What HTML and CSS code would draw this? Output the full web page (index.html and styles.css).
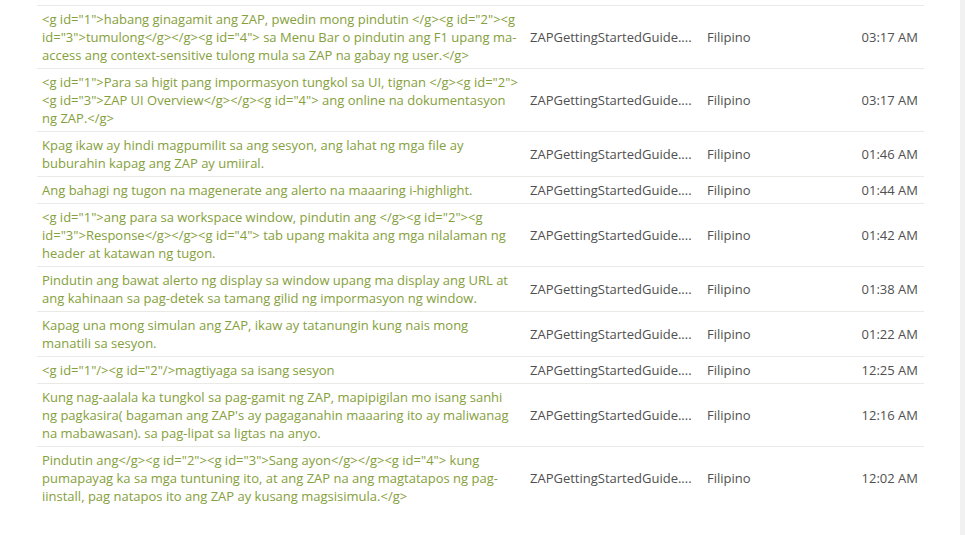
FILE: index.html
```html
<!DOCTYPE html>
<html>
<head>
<meta charset="utf-8">
<link rel="stylesheet" href="styles.css">
</head>
<body>
<div class="page">
  <main class="main">
    <table class="list">
      <colgroup>
        <col class="c-text"><col class="c-file"><col class="c-lang"><col class="c-time">
      </colgroup>
      <tbody>
        <tr><td class="src">&lt;g id="1"&gt;habang ginagamit ang ZAP, pwedin mong pindutin &lt;/g&gt;&lt;g id="2"&gt;&lt;g id="3"&gt;tumulong&lt;/g&gt;&lt;/g&gt;&lt;g id="4"&gt; sa Menu Bar o pindutin ang F1 upang ma-access ang context-sensitive tulong mula sa ZAP na gabay ng user.&lt;/g&gt;</td><td class="file">ZAPGettingStartedGuide....</td><td class="lang">Filipino</td><td class="time">03:17 AM</td></tr>
        <tr><td class="src">&lt;g id="1"&gt;Para sa higit pang impormasyon tungkol sa UI, tignan &lt;/g&gt;&lt;g id="2"&gt; &lt;g id="3"&gt;ZAP UI Overview&lt;/g&gt;&lt;/g&gt;&lt;g id="4"&gt; ang online na dokumentasyon ng ZAP.&lt;/g&gt;</td><td class="file">ZAPGettingStartedGuide....</td><td class="lang">Filipino</td><td class="time">03:17 AM</td></tr>
        <tr><td class="src">Kpag ikaw ay hindi magpumilit sa ang sesyon, ang lahat ng mga file ay buburahin kapag ang ZAP ay umiiral.</td><td class="file">ZAPGettingStartedGuide....</td><td class="lang">Filipino</td><td class="time">01:46 AM</td></tr>
        <tr><td class="src">Ang bahagi ng tugon na magenerate ang alerto na maaaring i-highlight.</td><td class="file">ZAPGettingStartedGuide....</td><td class="lang">Filipino</td><td class="time">01:44 AM</td></tr>
        <tr><td class="src">&lt;g id="1"&gt;ang para sa workspace window, pindutin ang &lt;/g&gt;&lt;g id="2"&gt;&lt;g id="3"&gt;Response&lt;/g&gt;&lt;/g&gt;&lt;g id="4"&gt; tab upang makita ang mga nilalaman ng header at katawan ng tugon.</td><td class="file">ZAPGettingStartedGuide....</td><td class="lang">Filipino</td><td class="time">01:42 AM</td></tr>
        <tr><td class="src">Pindutin ang bawat alerto ng display sa window upang ma display ang URL at ang kahinaan sa pag-detek sa tamang gilid ng impormasyon ng window.</td><td class="file">ZAPGettingStartedGuide....</td><td class="lang">Filipino</td><td class="time">01:38 AM</td></tr>
        <tr><td class="src">Kapag una mong simulan ang ZAP, ikaw ay tatanungin kung nais mong manatili sa sesyon.</td><td class="file">ZAPGettingStartedGuide....</td><td class="lang">Filipino</td><td class="time">01:22 AM</td></tr>
        <tr><td class="src">&lt;g id="1"/&gt;&lt;g id="2"/&gt;magtiyaga sa isang sesyon</td><td class="file">ZAPGettingStartedGuide....</td><td class="lang">Filipino</td><td class="time">12:25 AM</td></tr>
        <tr><td class="src">Kung nag-aalala ka tungkol sa pag-gamit ng ZAP, mapipigilan mo isang sanhi ng pagkasira( bagaman ang ZAP's ay pagaganahin maaaring ito ay maliwanag na mabawasan). sa pag-lipat sa ligtas na anyo.</td><td class="file">ZAPGettingStartedGuide....</td><td class="lang">Filipino</td><td class="time">12:16 AM</td></tr>
        <tr class="last"><td class="src">Pindutin ang&lt;/g&gt;&lt;g id="2"&gt;&lt;g id="3"&gt;Sang ayon&lt;/g&gt;&lt;/g&gt;&lt;g id="4"&gt; kung pumapayag ka sa mga tuntuning ito, at ang ZAP na ang magtatapos ng pag-iinstall, pag natapos ito ang ZAP ay kusang magsisimula.&lt;/g&gt;</td><td class="file">ZAPGettingStartedGuide....</td><td class="lang">Filipino</td><td class="time">12:02 AM</td></tr>
      </tbody>
    </table>
  </main>
  <div class="scrollbar"></div>
</div>
</body>
</html>
```
FILE: styles.css
```css
html, body {
  margin: 0;
  padding: 0;
  background: #fff;
}
.page {
  display: flex;
  height: 535px;
  overflow: hidden;
}
.main {
  flex: 1;
  padding: 5px 0 0 37px;
}
.scrollbar {
  width: 5px;
  background: #f1f1f1;
}
.list {
  width: 887px;
  border-collapse: collapse;
  table-layout: fixed;
  font-family: "Open Sans", "Liberation Sans", sans-serif;
  font-size: 13px;
  line-height: 18px;
}
.c-text { width: 488px; }
.c-file { width: 177px; }
.c-lang { width: 120px; }
.c-time { width: auto; }
.list td {
  border-top: 1px solid #e9e9e6;
  padding: 4px 5px 4px 5px;
  vertical-align: middle;
}
.src {
  color: #85a03c;
}
.file, .lang, .time {
  color: #505050;
  white-space: nowrap;
  overflow: hidden;
}
.time {
  text-align: right;
  padding-right: 6px !important;
}
```
